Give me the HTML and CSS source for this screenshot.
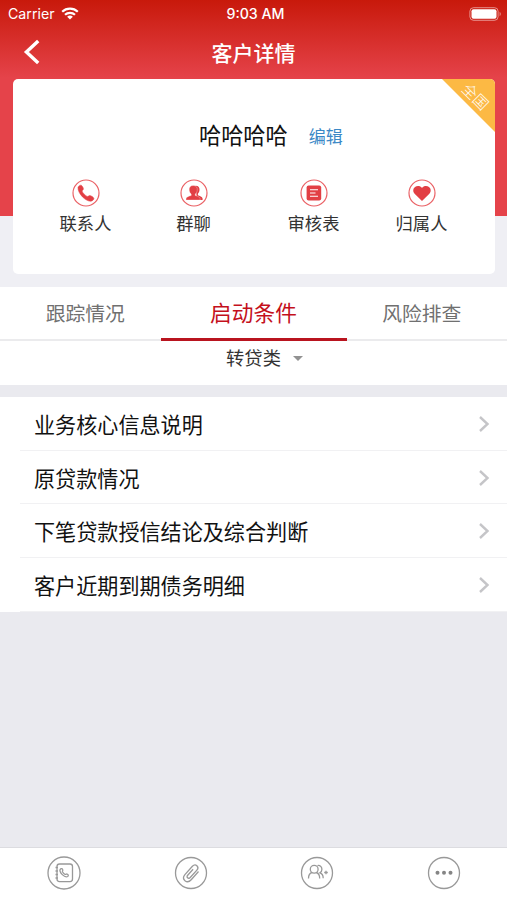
FILE: index.html
```html
<!DOCTYPE html>
<html lang="zh-CN">
<head>
    <meta charset="UTF-8">
    <meta name="viewport" content="width=device-width, initial-scale=1.0">
    <title>客户详情</title>
    <link rel="stylesheet" href="styles.css">
</head>
<body>
    <header class="top">
        <div class="status">
            <div class="carrier">
                <span>Carrier</span>
                <svg width="18" height="13" viewBox="0 0 18 13" fill="none" stroke="#fff" stroke-width="2.2">
                    <path d="M1.2 4.7a11.2 11.2 0 0 1 15.6 0"/>
                    <path d="M4 7.8a7.2 7.2 0 0 1 10 0"/>
                    <path d="M9 12.6L6.1 9.8a4.2 4.2 0 0 1 5.8 0z" fill="#fff" stroke="none"/>
                </svg>
            </div>
            <div class="time">9:03 AM</div>
            <div class="battery">
                <svg width="33" height="14" viewBox="0 0 33 14">
                    <rect x="0.9" y="0.7" width="28.2" height="12.6" rx="3.6" fill="none" stroke="#fff" stroke-opacity="0.5"/>
                    <rect x="2.5" y="2.3" width="25" height="9.4" rx="2" fill="#fff"/>
                    <path d="M30.6 4.8a2.6 2.6 0 0 1 0 4.4z" fill="#fff" fill-opacity="0.5"/>
                </svg>
            </div>
        </div>
        <nav class="navbar">
            <svg class="back" width="18" height="26" viewBox="0 0 18 26" fill="none" stroke="#fff" stroke-width="3.4">
                <path d="M15.2 2L3.4 13l11.8 11"/>
            </svg>
            <h1>客户详情</h1>
        </nav>
    </header>

    <section class="card">
        <div class="ribbon"><span>全国</span></div>
        <div class="customer">
            <span class="name">哈哈哈哈</span>
            <a class="edit">编辑</a>
        </div>
        <div class="actions">
            <div class="group">
                <div class="action">
                    <svg width="28" height="28" viewBox="0 0 28 28">
                        <circle cx="14" cy="14" r="13" fill="none" stroke="#ea6266" stroke-width="1.2"/>
                        <path d="M6 8.300c.3-1.200 2-2.500 3.200-2.100 1.100.6 2.300 2.700 2.200 3.800-.1 1-1.300 1.300-1.200 2.200.4 1.700 3.500 4.700 5.100 5.200 1 .2 1.500-1 2.600-.9 1.300.2 3.800 1.800 4 2.900.1 1.300-1.700 2.600-3 2.800C13.800 22.800 5.400 14.300 6 8.300z" fill="#e23f44" stroke="#e23f44" stroke-width="0.5"/>
                    </svg>
                    <span>联系人</span>
                </div>
                <div class="action">
                    <svg width="28" height="28" viewBox="0 0 28 28" fill="#e23f44">
                        <circle cx="14" cy="14" r="13" fill="none" stroke="#ea6266" stroke-width="1.2"/>
                        <path d="M15.500 6.800c3-.1 4.300 2 4 4.300-.1 1.700-.9 3-1.600 3.700v1.500c1.600.6 4.500 1.400 4.700 3.200v1.400H17z"/>
                        <path d="M13.300 6.500c2.900 0 4.300 2.100 4 4.600-.2 1.800-1 3.200-2 4v1.400c2 .7 4.500 1.300 4.900 3.300v1.200H6v-1.200c.3-2 3-2.600 5.200-3.300v-1.400c-1-.8-1.800-2.200-2-4-.3-2.500 1.200-4.600 4.100-4.600z" stroke="#fff" stroke-width="0.3"/>
                    </svg>
                    <span>群聊</span>
                </div>
            </div>
            <div class="group">
                <div class="action">
                    <svg width="28" height="28" viewBox="0 0 28 28">
                        <circle cx="14" cy="14" r="13" fill="none" stroke="#ea6266" stroke-width="1.2"/>
                        <rect x="6.6" y="6.6" width="14.6" height="14.8" rx="2" fill="#e23f44"/>
                        <path d="M10 10.700h8M10 14h5.500M10 17.300h8" stroke="#fff" stroke-width="1.1"/>
                    </svg>
                    <span>审核表</span>
                </div>
                <div class="action">
                    <svg width="28" height="28" viewBox="0 0 28 28">
                        <circle cx="14" cy="14" r="13" fill="none" stroke="#ea6266" stroke-width="1.2"/>
                        <path d="M14 22l-7.400-7.300c-2-2.200-1.600-5.200.4-6.700 2.200-1.500 5.300-1.200 7 .9 1.700-2.100 4.800-2.400 7-.9 2 1.500 2.400 4.500.4 6.700z" fill="#e23f44"/>
                    </svg>
                    <span>归属人</span>
                </div>
            </div>
        </div>
    </section>

    <div class="tabs">
        <div class="tab">跟踪情况</div>
        <div class="tab active">启动条件</div>
        <div class="tab">风险排查</div>
    </div>
    <div class="filter">
        <span>转贷类</span>
        <i class="caret"></i>
    </div>

    <ul class="list">
        <li><span>业务核心信息说明</span><svg width="12" height="18" viewBox="0 0 12 18"><path d="M2 2l7.500 7L2 16"/></svg></li>
        <li><span>原贷款情况</span><svg width="12" height="18" viewBox="0 0 12 18"><path d="M2 2l7.500 7L2 16"/></svg></li>
        <li><span>下笔贷款授信结论及综合判断</span><svg width="12" height="18" viewBox="0 0 12 18"><path d="M2 2l7.500 7L2 16"/></svg></li>
        <li><span>客户近期到期债务明细</span><svg width="12" height="18" viewBox="0 0 12 18"><path d="M2 2l7.500 7L2 16"/></svg></li>
    </ul>

    <footer class="toolbar">
        <div class="tool">
            <svg width="34" height="34" viewBox="0 0 34 34">
                <circle cx="17" cy="17" r="16"/>
                <rect x="10" y="8" width="15.5" height="17.6" rx="2.5"/>
                <path d="M8.500 11.500h2.500M8.500 15h2.500M8.500 18.500h2.500M8.500 22h2.500"/>
                <path d="M13.200 13.300c.6-1 2-.9 2.500.2.500 1-.5 1.500-.2 2.200.5 1 1.500 2.200 2.600 2.700.8.300 1.200-.7 2.100-.3 1.200.5 1.500 1.700.5 2.400-3 1.800-8.900-4.300-7.500-7.200z"/>
            </svg>
        </div>
        <div class="tool">
            <svg width="34" height="34" viewBox="0 0 34 34">
                <circle cx="17" cy="17" r="15.5"/>
                <path d="M24.500 15.500l-7.300 8.300c-2 2.200-4.400 2.400-6.200.9-1.800-1.600-1.900-4-.1-6.100l7.500-8.300c1.500-1.600 3.200-1.700 4.500-.6 1.300 1.200 1.300 2.900 0 4.400l-6.700 7.400c-.8.900-1.900 1-2.600.3-.7-.6-.7-1.600.1-2.500l5.400-6"/>
            </svg>
        </div>
        <div class="tool">
            <svg width="34" height="34" viewBox="0 0 34 34">
                <circle cx="17" cy="17" r="15.5"/>
                <circle cx="14.2" cy="13.3" r="3.9"/>
                <path d="M8.500 22.500c0-3.200 1.500-5.500 3.700-6M16.200 16.500c2.200.6 3.500 2.800 3.500 6"/>
                <path d="M17.500 9.600c2.300-.7 4.400 1.200 4.400 3.700 0 1.800-.7 2.900-1.900 3.600 2 .7 3.200 2.700 3.200 5.300M24.200 16.500h3.600M26 14.700v3.600"/>
            </svg>
        </div>
        <div class="tool">
            <svg width="34" height="34" viewBox="0 0 34 34">
                <circle cx="17" cy="17" r="15.5"/>
                <g class="dots"><circle cx="10.5" cy="16.7" r="2"/><circle cx="17" cy="16.7" r="2"/><circle cx="23.5" cy="16.7" r="2"/></g>
            </svg>
        </div>
    </footer>
</body>
</html>
```
FILE: styles.css
```css
* { box-sizing: border-box; }
body {
    display: flex;
    flex-direction: column;
    height: 900px;
    margin: 0;
    background: linear-gradient(#efeff4 340px, #eaeaef 340px);
    color: #111;
    font-family: "Liberation Sans", "Noto Sans CJK SC", sans-serif;
}
svg { display: block; flex: none; }

.top { height: 216px; flex: none; background: linear-gradient(#c8190b, #e5434a 78px); color: #fff; }
.status { display: grid; grid-template-columns: 1fr auto 1fr; align-items: center; height: 27px; padding: 0 5px 0 8px; font-family: Inter, sans-serif; }
.carrier { display: flex; align-items: center; gap: 6px; font-size: 14.2px; }
.time { padding-left: 1px; font-size: 14.2px; font-weight: 500; }
.battery { display: flex; justify-content: flex-end; }
.navbar { display: grid; grid-template-columns: 1fr auto 1fr; align-items: center; height: 50px; padding: 0 23px; }
.navbar h1 { margin: 0; padding-top: 3px; font-size: 21px; font-weight: 500; line-height: 30px; }

.card { position: relative; flex: none; height: 195px; margin: -137px 12px 0 13px; padding-top: 38px; background: #fff; border-radius: 5px; overflow: hidden; }
.ribbon { position: absolute; top: 0; right: 0; width: 53px; height: 53px; background: #fcb944; clip-path: polygon(0 0, 100% 0, 100% 100%); }
.ribbon span { position: absolute; top: 7px; left: 17px; width: 32px; color: #fff; font-size: 15px; font-weight: 300; line-height: 22px; text-align: center; transform: rotate(45deg); }
.customer { display: flex; align-items: center; height: 34px; padding-left: 186px; gap: 21px; }
.name { font-size: 22.2px; }
.edit { padding-top: 3px; color: #3b88c6; font-size: 17px; }
.actions { display: flex; gap: 12px; margin-top: 28px; padding-left: 18.5px; }
.group { display: flex; }
.action { display: flex; flex-direction: column; align-items: center; width: 108px; gap: 5px; color: #333; font-size: 17.3px; line-height: 25px; }

.tabs { display: flex; justify-content: center; flex: none; height: 54px; margin-top: 13px; padding-left: 2px; background: #fff; border-bottom: 2px solid #ebebed; }
.tab { flex: 1; color: #707070; font-size: 19.8px; line-height: 54px; text-align: center; }
.tab.active { flex: none; width: 186px; height: 54px; border-bottom: 3px solid #b9141f; color: #c4101c; font-size: 21.7px; line-height: 53px; }
.tab:first-child { padding-left: 8px; }
.tab:last-child { padding-right: 10px; }
.filter { display: flex; align-items: center; justify-content: center; flex: none; gap: 12px; height: 44px; padding: 0 0 12px 22px; background: #fff; color: #333; font-size: 18.3px; }
.caret { margin-top: 2px; border: 5.5px solid transparent; border-top-color: #929292; border-bottom: 0; }

.list { flex: none; margin: 12px 0 0; padding: 0; background: #fff; list-style: none; }
.list li { display: flex; align-items: center; justify-content: space-between; height: 53.7px; margin-left: 20px; padding: 1px 17px 0 14px; border-bottom: 1px solid #f1f1f3; font-size: 21.1px; }
.list path { fill: none; stroke: #c5c5c8; stroke-width: 2.4; }

.toolbar { display: flex; height: 53px; margin-top: auto; padding-left: 1px; background: #fff; border-top: 1px solid #dcdce0; }
.tool { display: flex; flex: 1; justify-content: center; padding-top: 8px; }
.tool svg { fill: none; stroke: #999; stroke-width: 1.3; }
.dots { fill: #858585; stroke: none; }
```
